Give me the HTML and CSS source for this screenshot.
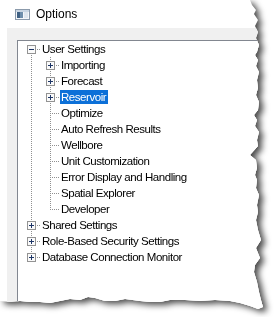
FILE: index.html
```html
<!DOCTYPE html>
<html lang="en">
<head>
    <meta charset="UTF-8">
    <title>Options</title>
    <link rel="stylesheet" href="styles.css">
</head>
<body>
    <div class="sheet">
        <div class="paper">
            <div class="titlebar">
                <svg class="app-icon" width="15" height="11" viewBox="0 0 15 11">
                    <rect x="0.5" y="0.5" width="14" height="10" fill="#f4f6f9" stroke="#8b9aab"/>
                    <rect x="1" y="1" width="13" height="2" fill="#c9d5e2"/>
                    <rect x="2" y="3" width="3" height="6" fill="#3f6184"/>
                    <rect x="5" y="3" width="3" height="6" fill="#6f8eab"/>
                    <rect x="9" y="3" width="4" height="6" fill="#dfe6ee"/>
                </svg>
                <span class="title">Options</span>
            </div>
            <div class="panel">
                <div class="tree">
                    <ul class="level">
                        <li>
                            <div class="row lv1 first">
                                <span class="exp">
                                    <svg width="9" height="9" viewBox="0 0 9 9"><rect x="0.5" y="0.5" width="8" height="8" fill="#fafafa" stroke="#939393"/><path d="M2 4.5h5" stroke="#1d3566"/></svg>
                                </span>
                                <span class="label">User Settings</span>
                            </div>
                            <ul class="children">
                                <li><div class="row lv2"><span class="exp"><svg width="9" height="9" viewBox="0 0 9 9"><rect x="0.5" y="0.5" width="8" height="8" fill="#fafafa" stroke="#939393"/><path d="M2 4.5h5M4.5 2v5" stroke="#1d3566"/></svg></span><span class="label">Importing</span></div></li>
                                <li><div class="row lv2"><span class="exp"><svg width="9" height="9" viewBox="0 0 9 9"><rect x="0.5" y="0.5" width="8" height="8" fill="#fafafa" stroke="#939393"/><path d="M2 4.5h5M4.5 2v5" stroke="#1d3566"/></svg></span><span class="label">Forecast</span></div></li>
                                <li><div class="row lv2"><span class="exp"><svg width="9" height="9" viewBox="0 0 9 9"><rect x="0.5" y="0.5" width="8" height="8" fill="#fafafa" stroke="#939393"/><path d="M2 4.5h5M4.5 2v5" stroke="#1d3566"/></svg></span><span class="label selected">Reservoir</span></div></li>
                                <li><div class="row lv2"><span class="exp"></span><span class="label">Optimize</span></div></li>
                                <li><div class="row lv2"><span class="exp"></span><span class="label">Auto Refresh Results</span></div></li>
                                <li><div class="row lv2"><span class="exp"></span><span class="label">Wellbore</span></div></li>
                                <li><div class="row lv2"><span class="exp"></span><span class="label">Unit Customization</span></div></li>
                                <li><div class="row lv2"><span class="exp"></span><span class="label">Error Display and Handling</span></div></li>
                                <li><div class="row lv2"><span class="exp"></span><span class="label">Spatial Explorer</span></div></li>
                                <li><div class="row lv2 last"><span class="exp"></span><span class="label">Developer</span></div></li>
                            </ul>
                        </li>
                        <li><div class="row lv1"><span class="exp"><svg width="9" height="9" viewBox="0 0 9 9"><rect x="0.5" y="0.5" width="8" height="8" fill="#fafafa" stroke="#939393"/><path d="M2 4.5h5M4.5 2v5" stroke="#1d3566"/></svg></span><span class="label">Shared Settings</span></div></li>
                        <li><div class="row lv1"><span class="exp"><svg width="9" height="9" viewBox="0 0 9 9"><rect x="0.5" y="0.5" width="8" height="8" fill="#fafafa" stroke="#939393"/><path d="M2 4.5h5M4.5 2v5" stroke="#1d3566"/></svg></span><span class="label">Role-Based Security Settings</span></div></li>
                        <li><div class="row lv1 last"><span class="exp"><svg width="9" height="9" viewBox="0 0 9 9"><rect x="0.5" y="0.5" width="8" height="8" fill="#fafafa" stroke="#939393"/><path d="M2 4.5h5M4.5 2v5" stroke="#1d3566"/></svg></span><span class="label">Database Connection Monitor</span></div></li>
                    </ul>
                </div>
            </div>
        </div>
    </div>
</body>
</html>
```

FILE: styles.css
```css
body {
    margin: 0;
    background: #fff;
    font-family: "Liberation Sans", Arial, sans-serif;
    color: #000;
}

/* torn screenshot look */
.sheet {
    width: 279px;
    height: 317px;
    filter: drop-shadow(4px 3px 3px rgba(0, 0, 0, 0.7));
}

.paper {
    width: 279px;
    height: 317px;
    background: #fff;
    display: flex;
    flex-direction: column;
    clip-path: polygon(0 0, 250px 0, 252px 5px, 256px 10px, 254px 14px, 258px 20px, 255px 26px, 258px 32px, 256px 38px, 259px 45px, 257px 52px, 255px 55px, 258px 60px, 256px 66px, 259px 72px, 257px 80px, 258px 88px, 256px 95px, 259px 102px, 258px 110px, 254px 115px, 257px 120px, 255px 126px, 259px 132px, 257px 140px, 258px 146px, 250px 155px, 256px 160px, 257px 168px, 255px 175px, 257px 180px, 256px 188px, 259px 195px, 257px 205px, 258px 212px, 256px 220px, 258px 230px, 261px 240px, 256px 248px, 260px 258px, 255px 265px, 254px 272px, 257px 282px, 259px 292px, 261px 300px, 263px 307px, 258px 309px, 250px 306px, 240px 303px, 230px 301px, 215px 300px, 200px 301px, 185px 300px, 170px 300px, 160px 302px, 150px 302px, 140px 301px, 125px 299px, 115px 301px, 105px 301px, 95px 298px, 88px 297px, 80px 300px, 70px 299px, 60px 301px, 50px 303px, 40px 302px, 30px 302px, 20px 301px, 10px 302px, 0 301px);
}

.titlebar {
    height: 28px;
    display: flex;
    align-items: center;
    padding-left: 15px;
    gap: 6px;
}

.app-icon {
    display: block;
}

.title {
    font-size: 12px;
}

.panel {
    flex: 1;
    margin-left: 7px;
    background: #f0f0f0;
    padding: 12px 0 0 10px;
    display: flex;
}

.tree {
    flex: 1;
    background: #fff;
    border-top: 1px solid #828790;
    border-left: 1px solid #828790;
    font-size: 11.5px;
    letter-spacing: -0.45px;
}

.tree ul {
    list-style: none;
    margin: 0;
    padding: 0;
}

.row {
    height: 16px;
    display: flex;
    align-items: center;
    background-repeat: no-repeat;
}

.exp {
    width: 19px;
    height: 16px;
    display: flex;
    justify-content: center;
    align-items: center;
}

.exp svg {
    display: block;
}

.label {
    line-height: 14px;
    padding: 0 2px 0 1px;
    white-space: nowrap;
}

.label.selected {
    background: #0c70d8;
    color: #fff;
}

/* dotted tree lines */
.lv1 {
    padding-left: 4px;
    background-image:
        repeating-linear-gradient(to right, #909090 0 1px, transparent 1px 2px),
        repeating-linear-gradient(to bottom, #909090 0 1px, transparent 1px 2px);
    background-position: 13px 8px, 13px 0;
    background-size: 10px 1px, 1px 16px;
}

.lv1.first {
    background-position: 13px 8px, 13px 8px;
    background-size: 10px 1px, 1px 8px;
}

.lv1.last {
    background-size: 10px 1px, 1px 9px;
}

.children {
    background-image: repeating-linear-gradient(to bottom, #909090 0 1px, transparent 1px 2px);
    background-position: 13px 0;
    background-size: 1px 100%;
    background-repeat: no-repeat;
}

.lv2 {
    padding-left: 23px;
    background-image:
        repeating-linear-gradient(to right, #909090 0 1px, transparent 1px 2px),
        repeating-linear-gradient(to bottom, #909090 0 1px, transparent 1px 2px);
    background-position: 32px 8px, 32px 0;
    background-size: 10px 1px, 1px 16px;
}

.lv2.last {
    background-size: 10px 1px, 1px 9px;
}
```
